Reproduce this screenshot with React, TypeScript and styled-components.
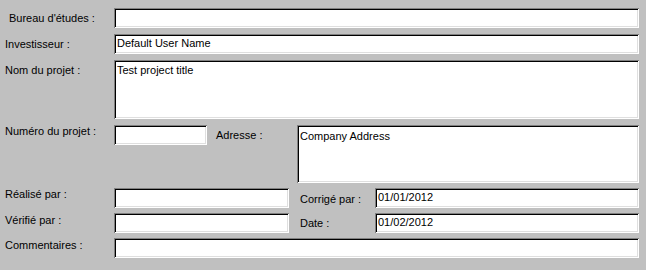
import React from 'react';
import styled, { createGlobalStyle } from 'styled-components';

const GlobalStyle = createGlobalStyle`
  html, body {
    margin: 0;
    padding: 0;
    background: #c0c0c0;
  }
  body {
    font-family: 'Liberation Sans', Arial, sans-serif;
    font-size: 11px;
    color: #000;
  }
`;

const Styles = {
  Form: styled.div`
    width: 646px;
    height: 270px;
    box-sizing: border-box;
    padding: 8px 7px 0 5px;
    background: #c0c0c0;
    display: flex;
    flex-direction: column;
  `,
  Row: styled.div<{ $gap?: number }>`
    display: flex;
    align-items: flex-start;
    margin-top: ${(p) => p.$gap ?? 0}px;
  `,
  Label: styled.div<{ $width?: number; $top?: number; $indent?: number; $left?: number }>`
    flex: none;
    box-sizing: border-box;
    width: ${(p) => p.$width ?? 109}px;
    margin-left: ${(p) => p.$left ?? 0}px;
    padding-top: ${(p) => p.$top ?? 4}px;
    padding-left: ${(p) => p.$indent ?? 0}px;
    line-height: 13px;
    white-space: nowrap;
  `,
  Field: styled.div<{ $width?: number; $height?: number; $pad?: number }>`
    box-sizing: border-box;
    ${(p) => (p.$width ? `width: ${p.$width}px; flex: none;` : 'flex: 1;')}
    height: ${(p) => p.$height ?? 20}px;
    padding: ${(p) => p.$pad ?? 3}px 3px 0 3px;
    background: #fff;
    line-height: 13px;
    white-space: nowrap;
    overflow: hidden;
    box-shadow:
      inset 1px 1px 0 #808080,
      inset -1px -1px 0 #fff,
      inset 2px 2px 0 #000,
      inset -2px -2px 0 #dfdfdf;
  `,
};

const App = () => {
  return (
    <>
      <GlobalStyle />
      <Styles.Form>
        <Styles.Row>
          <Styles.Label $indent={4}>Bureau d'études :</Styles.Label>
          <Styles.Field />
        </Styles.Row>

        <Styles.Row $gap={6}>
          <Styles.Label>Investisseur :</Styles.Label>
          <Styles.Field>Default User Name</Styles.Field>
        </Styles.Row>

        <Styles.Row $gap={6}>
          <Styles.Label>Nom du projet :</Styles.Label>
          <Styles.Field $height={59} $pad={4}>Test project title</Styles.Field>
        </Styles.Row>

        <Styles.Row $gap={6}>
          <Styles.Label $top={0}>Numéro du projet :</Styles.Label>
          <Styles.Field $width={93} />
          <Styles.Label $left={9} $width={81} $top={4}>
            Adresse :
          </Styles.Label>
          <Styles.Field $height={58} $pad={5}>Company Address</Styles.Field>
        </Styles.Row>

        <Styles.Row $gap={5}>
          <Styles.Label $top={0}>Réalisé par :</Styles.Label>
          <Styles.Field $width={175} />
          <Styles.Label $left={11} $width={75} $top={5}>
            Corrigé par :
          </Styles.Label>
          <Styles.Field>01/01/2012</Styles.Field>
        </Styles.Row>

        <Styles.Row $gap={5}>
          <Styles.Label $top={1}>Vérifié par :</Styles.Label>
          <Styles.Field $width={175} />
          <Styles.Label $left={11} $width={75} $top={4}>
            Date :
          </Styles.Label>
          <Styles.Field>01/02/2012</Styles.Field>
        </Styles.Row>

        <Styles.Row $gap={5}>
          <Styles.Label $top={1}>Commentaires :</Styles.Label>
          <Styles.Field />
        </Styles.Row>
      </Styles.Form>
    </>
  );
};

export default App;
